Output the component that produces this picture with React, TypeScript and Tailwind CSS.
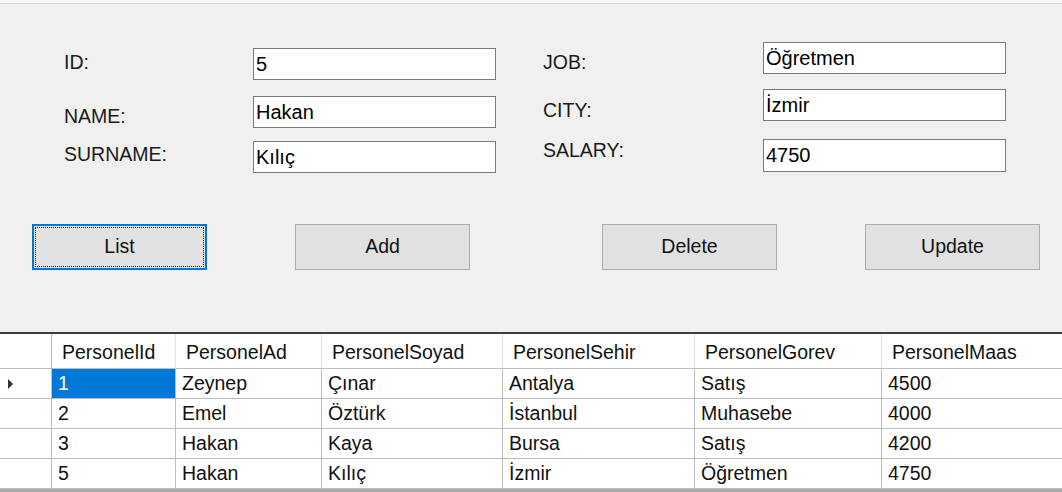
import React from 'react';

const leftFields = [
  { label: 'ID:', value: '5' },
  { label: 'NAME:', value: 'Hakan' },
  { label: 'SURNAME:', value: 'Kılıç' },
];

const rightFields = [
  { label: 'JOB:', value: 'Öğretmen' },
  { label: 'CITY:', value: 'İzmir' },
  { label: 'SALARY:', value: '4750' },
];

const columns = ['PersonelId', 'PersonelAd', 'PersonelSoyad', 'PersonelSehir', 'PersonelGorev', 'PersonelMaas'];

const rows = [
  ['1', 'Zeynep', 'Çınar', 'Antalya', 'Satış', '4500'],
  ['2', 'Emel', 'Öztürk', 'İstanbul', 'Muhasebe', '4000'],
  ['3', 'Hakan', 'Kaya', 'Bursa', 'Satış', '4200'],
  ['5', 'Hakan', 'Kılıç', 'İzmir', 'Öğretmen', '4750'],
];

function TextBox({ value, className = '' }: { value: string; className?: string }) {
  return (
    <input
      readOnly
      value={value}
      className={`block w-[243px] h-[32px] border border-[#7a7a7a] bg-white pl-[2px] text-[20px] text-black outline-none ${className}`}
    />
  );
}

function Btn({ label, focused = false, className = '' }: { label: string; focused?: boolean; className?: string }) {
  return (
    <button
      className={`relative w-[175px] h-[46px] bg-[#e1e1e1] text-[19.5px] text-[#111] ${
        focused ? 'border-2 border-[#0078d7]' : 'border border-[#adadad]'
      } ${className}`}
    >
      {focused && <span className="absolute inset-[1px] border border-dotted border-[#222]" />}
      <span className="relative">{label}</span>
    </button>
  );
}

export default function App() {
  return (
    <div className="w-[1062px] h-[492px] overflow-hidden bg-[#f0f0f0] text-[#1a1a1a]" style={{ fontFamily: '"Liberation Sans", Arial, sans-serif' }}>
      {/* title strip */}
      <div className="h-[4px] bg-[#f7f7f7] border-b border-[#d6d6d6]" />

      {/* form */}
      <div className="h-[328px] flex flex-col">
        <div className="h-[180px] flex text-[19.5px] leading-[22px]">
          {/* left labels */}
          <div className="ml-[64px] w-[189px] pt-[47px] flex flex-col">
            <div>{leftFields[0].label}</div>
            <div className="mt-[32px]">{leftFields[1].label}</div>
            <div className="mt-[16px]">{leftFields[2].label}</div>
          </div>
          {/* left inputs */}
          <div className="pt-[44px] flex flex-col">
            <TextBox value={leftFields[0].value} />
            <TextBox value={leftFields[1].value} className="mt-[16px]" />
            <TextBox value={leftFields[2].value} className="mt-[13px]" />
          </div>
          {/* right labels */}
          <div className="ml-[47px] w-[220px] pt-[47px] flex flex-col">
            <div>{rightFields[0].label}</div>
            <div className="mt-[26px]">{rightFields[1].label}</div>
            <div className="mt-[18px]">{rightFields[2].label}</div>
          </div>
          {/* right inputs */}
          <div className="pt-[38px] flex flex-col">
            <TextBox value={rightFields[0].value} />
            <TextBox value={rightFields[1].value} className="mt-[15px]" />
            <TextBox value={rightFields[2].value} className="mt-[18px] h-[33px]" />
          </div>
        </div>

        <div className="mt-[40px] flex pl-[32px]">
          <Btn label="List" focused />
          <Btn label="Add" className="ml-[88px]" />
          <Btn label="Delete" className="ml-[132px]" />
          <Btn label="Update" className="ml-[88px]" />
        </div>
      </div>

      {/* data grid */}
      <div className="border-t-2 border-[#3c3c3c] bg-[#ababab] h-[160px] text-[19.5px] text-[#111]">
        <div className="grid grid-cols-[52px_124px_146px_181px_192px_187px_1fr] bg-white">
          <div className="h-[35px] border-r border-b border-[#bdbdbd]" />
          {columns.map((c, i) => (
            <div
              key={c}
              className={`h-[35px] flex items-center pl-[10px] pt-[3px] border-b border-[#bdbdbd] ${
                i < columns.length - 1 ? 'border-r border-r-[#e3e3e3]' : ''
              }`}
            >
              {c}
            </div>
          ))}
          {rows.map((r, ri) => (
            <React.Fragment key={ri}>
              <div className="h-[30px] flex items-center pl-[8px] border-r border-b border-[#bdbdbd]">
                {ri === 0 && (
                  <svg width="6" height="10" viewBox="0 0 6 10">
                    <path d="M0 0 L5 5 L0 10 Z" fill="#333" />
                  </svg>
                )}
              </div>
              {r.map((v, ci) => {
                const sel = ri === 0 && ci === 0;
                return (
                  <div
                    key={ci}
                    className={`h-[30px] flex items-center pl-[6px] pt-[1px] border-b border-[#bdbdbd] ${
                      ci < r.length - 1 ? 'border-r' : ''
                    } ${sel ? 'bg-[#0078d7] text-white' : ''}`}
                  >
                    {v}
                  </div>
                );
              })}
            </React.Fragment>
          ))}
        </div>
      </div>
    </div>
  );
}
